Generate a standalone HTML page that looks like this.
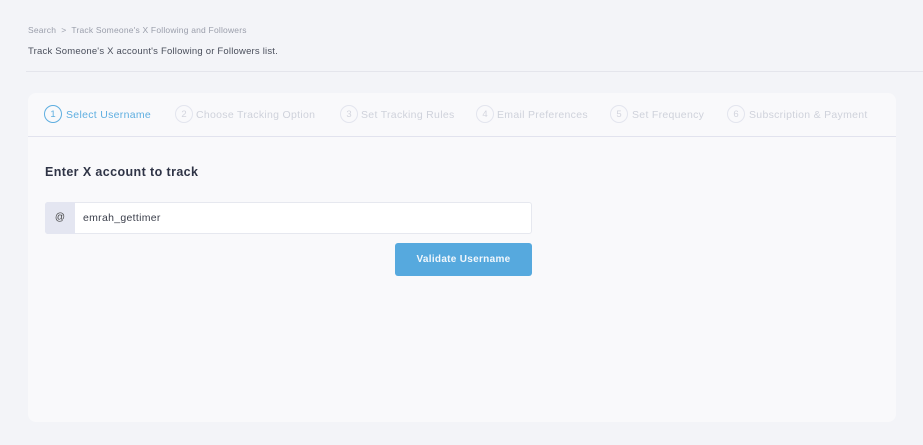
<!DOCTYPE html>
<html><head><style>
*{margin:0;padding:0;box-sizing:border-box}
body{width:923px;height:445px;background:#f3f4f8;font-family:"Liberation Sans",sans-serif;position:relative;overflow:hidden}
.a{position:absolute;white-space:nowrap}
.bc{left:28px;top:25px;font-size:8.5px;color:#9a9eab;letter-spacing:0.2px}
.sub{left:28px;top:46px;font-size:9.5px;color:#4a4f5c;letter-spacing:0.2px}
.hr{left:26px;top:71px;width:897px;height:1px;background:#e4e5ec}
.card{left:28px;top:93px;width:868px;height:329px;background:#f9f9fb;border-radius:8px}
.sdiv{left:28px;top:136px;width:868px;height:1px;background:#e2e3ee}
.c{position:absolute;width:18px;height:18px;border-radius:50%;border:1px solid #e3e5ee;color:#d3d5de;font-size:9.5px;text-align:center;line-height:17px;top:105px}
.st{top:109px;font-size:10.5px;color:#cfd2db;letter-spacing:0.3px}
.on{border-color:#5eaee0;color:#5eaee0}
h3{position:absolute;left:45px;top:165px;font-size:12.5px;color:#2f3446;font-weight:bold;letter-spacing:0.4px}
.inp{left:45px;top:202px;width:487px;height:32px;background:#fff;border:1px solid #e6e8ef;border-radius:3px}
.at{left:45px;top:202px;width:30px;height:32px;background:#e4e6f1;border-radius:3px 0 0 3px;font-size:10px;color:#444;text-align:center;line-height:32px}
.val{left:83px;top:212px;font-size:10.5px;color:#3a3e4a;letter-spacing:0.3px}
.btn{left:395px;top:243px;width:137px;height:33px;background:#56a9de;border-radius:3px;color:#f1f7fc;font-size:10px;font-weight:bold;text-align:center;line-height:33px;letter-spacing:0.3px}
</style></head><body>
<div class="a bc">Search &nbsp;&gt;&nbsp; Track Someone's X Following and Followers</div>
<div class="a sub">Track Someone's X account's Following or Followers list.</div>
<div class="a hr"></div>
<div class="a card"></div>
<div class="c on" style="left:44px">1</div><div class="a st" style="left:66px;color:#5eaee0">Select Username</div>
<div class="c" style="left:175px">2</div><div class="a st" style="left:196px">Choose Tracking Option</div>
<div class="c" style="left:340px">3</div><div class="a st" style="left:361px">Set Tracking Rules</div>
<div class="c" style="left:476px">4</div><div class="a st" style="left:497px">Email Preferences</div>
<div class="c" style="left:610px">5</div><div class="a st" style="left:632px">Set Frequency</div>
<div class="c" style="left:727px">6</div><div class="a st" style="left:749px">Subscription &amp; Payment</div>
<div class="a sdiv"></div>
<h3>Enter X account to track</h3>
<div class="a inp"></div>
<div class="a at">@</div>
<div class="a val">emrah_gettimer</div>
<div class="a btn">Validate Username</div>
</body></html>
